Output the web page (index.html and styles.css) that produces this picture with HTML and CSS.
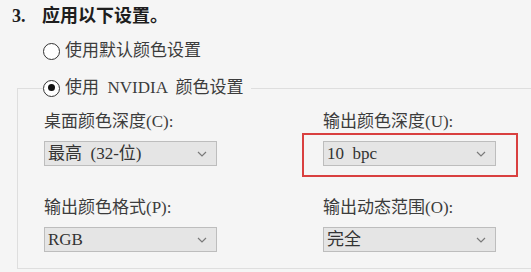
FILE: index.html
```html
<!DOCTYPE html>
<html lang="zh-CN">
<head>
    <meta charset="UTF-8">
    <title>NVIDIA 颜色设置</title>
    <link rel="stylesheet" href="styles.css">
</head>
<body>
    <div class="title"><span class="num">3.</span>应用以下设置。</div>

    <div class="option">
        <span class="radio"></span>
        <span>使用默认颜色设置</span>
    </div>

    <fieldset class="group">
        <legend class="option legend">
            <span class="radio checked"></span>
            <span>使用&nbsp; NVIDIA &nbsp;颜色设置</span>
        </legend>

        <div class="fields">
            <div class="field">
                <div class="label">桌面颜色深度(C):</div>
                <div class="combo">
                    <span>最高&nbsp; (32-位)</span>
                    <svg class="chevron" width="10" height="6" viewBox="0 0 10 6"><path d="M1 1 L5 5 L9 1" fill="none" stroke="#7a7a7a" stroke-width="1.2"/></svg>
                </div>
            </div>
            <div class="field">
                <div class="label">输出颜色深度(U):</div>
                <div class="combo marked">
                    <span>10&nbsp; bpc</span>
                    <svg class="chevron" width="10" height="6" viewBox="0 0 10 6"><path d="M1 1 L5 5 L9 1" fill="none" stroke="#7a7a7a" stroke-width="1.2"/></svg>
                </div>
            </div>
            <div class="field">
                <div class="label">输出颜色格式(P):</div>
                <div class="combo">
                    <span>RGB</span>
                    <svg class="chevron" width="10" height="6" viewBox="0 0 10 6"><path d="M1 1 L5 5 L9 1" fill="none" stroke="#7a7a7a" stroke-width="1.2"/></svg>
                </div>
            </div>
            <div class="field">
                <div class="label">输出动态范围(O):</div>
                <div class="combo">
                    <span>完全</span>
                    <svg class="chevron" width="10" height="6" viewBox="0 0 10 6"><path d="M1 1 L5 5 L9 1" fill="none" stroke="#7a7a7a" stroke-width="1.2"/></svg>
                </div>
            </div>
        </div>
    </fieldset>
</body>
</html>
```

FILE: styles.css
```css
body {
    margin: 0;
    background-color: #f5f5f5;
    font-family: "Liberation Serif", "Noto Sans CJK SC", serif;
    font-size: 17px;
    color: #3c3c3c;
    width: 531px;
    height: 272px;
    overflow: hidden;
}

.title {
    padding: 6px 0 0 12px;
    line-height: 20px;
    font-size: 18px;
    font-weight: bold;
    color: #1e1e1e;
}

.title .num {
    display: inline-block;
    width: 30px;
}

.option {
    display: flex;
    align-items: center;
    gap: 5px;
    margin: 13px 0 0 43px;
    line-height: 24px;
    height: 24px;
}

.radio {
    width: 17px;
    height: 17px;
    border: 1.5px solid #333;
    border-radius: 50%;
    background-color: #fff;
    box-sizing: border-box;
    position: relative;
}

.radio.checked::after {
    content: "";
    position: absolute;
    left: 3.5px;
    top: 3.5px;
    width: 7px;
    height: 7px;
    border-radius: 50%;
    background-color: #111;
}

.group {
    margin: 13px 0 0 17px;
    padding: 0 0 16px 26px;
    border: 1px solid #dedede;
    border-right: none;
}

.legend {
    margin: 0 0 0 -1px;
    padding: 0 7px 0 0;
}

.fields {
    display: grid;
    grid-template-columns: 173px 173px;
    column-gap: 106px;
    row-gap: 30px;
    margin-top: 10px;
}

.label {
    line-height: 24px;
    margin-bottom: 7px;
}

.combo {
    height: 25px;
    box-sizing: border-box;
    border: 1px solid #bdbdbd;
    background-color: #e5e5e5;
    padding: 0 9px 0 3px;
    display: flex;
    align-items: center;
    justify-content: space-between;
    line-height: 23px;
    color: #333;
}

.combo.marked {
    position: relative;
}

.combo.marked::after {
    content: "";
    position: absolute;
    top: -9px;
    left: -22px;
    right: -23px;
    bottom: -12px;
    border: 2px solid #d9403f;
}
```
